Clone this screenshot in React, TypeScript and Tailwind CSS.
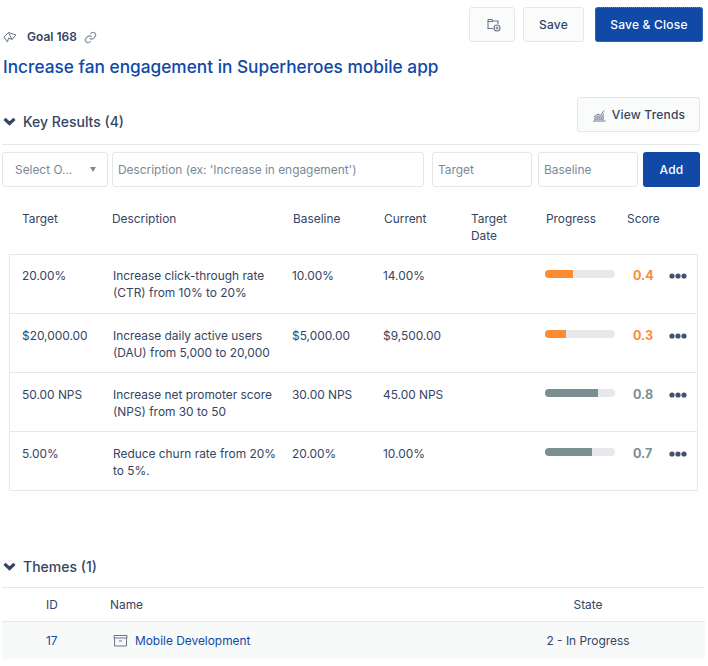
import React from "react";

const rows = [
  { t: "20.00%", d: "Increase click-through rate (CTR) from 10% to 20%", b: "10.00%", c: "14.00%", p: 40, s: "0.4", orange: true },
  { t: "$20,000.00", d: "Increase daily active users (DAU) from 5,000 to 20,000", b: "$5,000.00", c: "$9,500.00", p: 30, s: "0.3", orange: true },
  { t: "50.00 NPS", d: "Increase net promoter score (NPS) from 30 to 50", b: "30.00 NPS", c: "45.00 NPS", p: 75, s: "0.8", orange: false },
  { t: "5.00%", d: "Reduce churn rate from 20% to 5%.", b: "20.00%", c: "10.00%", p: 67, s: "0.7", orange: false },
];

function Chevron() {
  return (
    <svg width="13" height="9" viewBox="0 0 13 9" className="shrink-0">
      <path d="M1.5 1.8 L6.5 6.5 L11.5 1.8" fill="none" stroke="#344563" strokeWidth="3.2" />
    </svg>
  );
}

function Dots() {
  return (
    <svg width="18" height="6" viewBox="0 0 18 6">
      <circle cx="3" cy="3" r="2.6" fill="#42526e" />
      <circle cx="9" cy="3" r="2.6" fill="#42526e" />
      <circle cx="15" cy="3" r="2.6" fill="#42526e" />
    </svg>
  );
}

export default function App() {
  return (
    <div className="w-[708px] h-[666px] overflow-hidden bg-white text-[11.9px] text-[#344563] font-['Inter','Liberation_Sans',sans-serif]">
      <div className="flex justify-between pl-[3px] pr-[5px] pt-[7px] h-[49px]">
        <div className="flex items-center h-[16px] mt-[22px]">
          <svg width="14" height="13" viewBox="0 0 14 13" fill="none" stroke="#6b778c" strokeWidth="1">
            <path d="M1 6 L5.5 1.5 L13 4 L9 8.5 L5.5 7 L4.5 11 Z M5.5 1.5 L9 8.5" />
          </svg>
          <span className="ml-[10px] text-[12px] font-semibold text-[#344563]">Goal 168</span>
          <svg width="13" height="13" viewBox="0 0 24 24" fill="none" stroke="#7a8699" strokeWidth="2" className="ml-[7px]">
            <path d="M10 13a5 5 0 0 0 7.5.5l3-3a5 5 0 0 0-7-7l-1.7 1.7" />
            <path d="M14 11a5 5 0 0 0-7.5-.5l-3 3a5 5 0 0 0 7 7l1.7-1.7" />
          </svg>
        </div>
        <div className="flex">
          <button className="w-[46px] h-[35px] flex items-center justify-center bg-[#fafbfb] border border-[#e4e6ea] rounded-[3px]">
            <svg width="14" height="14" viewBox="0 0 14 14" fill="none" stroke="#6b778c" strokeWidth="1.1" className="ml-[3px]">
              <path d="M1 1.5 H5 L6 3 H11 V6 M1 1.5 V10.5 H6" />
              <path d="M1 3.5 H6" />
              <circle cx="10" cy="10" r="3" />
              <path d="M10 8.5 V11.5 M8.5 10 H11.5" />
            </svg>
          </button>
          <button className="ml-[8px] w-[61px] h-[35px] bg-[#fafbfb] border border-[#e4e6ea] rounded-[3px] text-[12px] font-medium tracking-[0.2px]">Save</button>
          <button className="ml-[11px] w-[108px] h-[35px] bg-[#1049a6] text-white rounded-[3px] text-[12px] font-medium tracking-[0.2px] border border-dotted border-[#5b7fbe]">Save & Close</button>
        </div>
      </div>
      <h1 className="pl-[3px] text-[17.25px] leading-[24px] mt-[6px] font-medium text-[#1049a6]">Increase fan engagement in Superheroes mobile app</h1>

      <div className="mt-[18px] ml-[2px] mr-[8px] flex justify-between items-start h-[48px] border-b border-[#e6e8ec]">
        <div className="flex items-center mt-[14px] ml-[1px]">
          <Chevron />
          <span className="ml-[7px] text-[14px] font-medium text-[#344563]">Key Results (4)</span>
        </div>
        <button className="w-[123px] h-[35px] flex items-center justify-center bg-[#fafbfb] border border-[#e4e6ea] rounded-[3px] text-[12px] font-medium tracking-[0.2px]">
          <svg width="14" height="14" viewBox="0 0 14 14" fill="none" stroke="#6b778c" strokeWidth="1" className="mr-[6px]">
            <path d="M1 13 H13.5 M2 9 L6 6 L8.5 7.5 L12 2.5" />
            <path d="M2 12 V10 L6 7 L8.5 8.5 L12 5 V12 Z" fill="#a5adba" stroke="none" />
          </svg>
          View Trends
        </button>
      </div>

      <div className="mt-[7px] ml-[2px] flex h-[35px] text-[#7a8a99]">
        <div className="w-[106px] flex items-center justify-between pl-[12px] pr-[11px] border border-[#e4e6ea] rounded-[3px]">
          <span>Select O...</span>
          <span className="w-0 h-0 border-l-[3.5px] border-r-[3.5px] border-t-[5px] border-l-transparent border-r-transparent border-t-[#7a8a99]" />
        </div>
        <div className="ml-[4px] w-[312px] flex items-center pl-[5px] border border-[#e4e6ea] rounded-[3px]">Description (ex: 'Increase in engagement')</div>
        <div className="ml-[8px] w-[100px] flex items-center pl-[5px] border border-[#e4e6ea] rounded-[3px]">Target</div>
        <div className="ml-[6px] w-[100px] flex items-center pl-[5px] border border-[#e4e6ea] rounded-[3px]">Baseline</div>
        <button className="ml-[5px] w-[57px] bg-[#1049a6] text-white text-[12px] font-medium tracking-[0.2px] rounded-[3px]">Add</button>
      </div>

      <div className="mt-[23px] ml-[22px] grid grid-cols-[90px_181px_91px_87px_75px_81px_1fr] leading-[17px] h-[44px]">
        <div>Target</div>
        <div>Description</div>
        <div>Baseline</div>
        <div>Current</div>
        <div className="w-[50px]">Target Date</div>
        <div>Progress</div>
        <div>Score</div>
      </div>

      <div className="ml-[9px] w-[689px] border border-[#e6e8ec]">
        {rows.map((r, i) => (
          <div key={r.t} className={`grid grid-cols-[91px_179px_91px_162px_88px_36px_1fr] pl-[12px] leading-[17px] ${i > 0 ? "h-[59px] pt-[13px] border-t border-[#e6e8ec]" : "h-[58px] pt-[12px]"}`}>
            <div>{r.t}</div>
            <div className="pr-[2px]">{r.d}</div>
            <div>{r.b}</div>
            <div>{r.c}</div>
            <div className="pt-[3px]">
              <div className="w-[70px] h-[8px] rounded-full bg-[#e6e8ec] overflow-hidden">
                <div className={`h-full ${r.orange ? "bg-[#fb8c33]" : "bg-[#7a9090]"}`} style={{ width: `${r.p}%` }} />
              </div>
            </div>
            <div className={`font-bold text-[12.5px] ${r.orange ? "text-[#fb8c33]" : "text-[#7a9090]"}`}>{r.s}</div>
            <div className="pt-[6px]"><Dots /></div>
          </div>
        ))}
      </div>

      <div className="mt-[65px] ml-[2px] mr-[3px] h-[32px] flex items-start border-b border-[#e6e8ec]">
        <div className="flex items-center ml-[1px]">
          <Chevron />
          <span className="ml-[7px] text-[14px] font-medium text-[#344563]">Themes (1)</span>
        </div>
      </div>
      <div className="ml-[2px] mr-[3px] grid grid-cols-[108px_420px_116px] h-[34px] items-center border-b border-[#e6e8ec] pt-[1px]">
        <div className="pl-[44px]">ID</div>
        <div>Name</div>
        <div className="text-center">State</div>
      </div>
      <div className="ml-[2px] mr-[3px] grid grid-cols-[108px_420px_116px] h-[37px] items-center bg-[#f8f9f9]">
        <div className="pl-[44px] text-[#1049a6]">17</div>
        <div className="flex items-center text-[#1049a6] pl-[3px]">
          <svg width="15" height="13" viewBox="0 0 15 13" fill="none" stroke="#6b778c" strokeWidth="1" className="mr-[7px]">
            <path d="M1 1.5 H14 V4 H1 Z M1.5 4 V12 H13.5 V4 M6 7 H9" />
          </svg>
          Mobile Development
        </div>
        <div className="text-center">2 - In Progress</div>
      </div>
    </div>
  );
}
